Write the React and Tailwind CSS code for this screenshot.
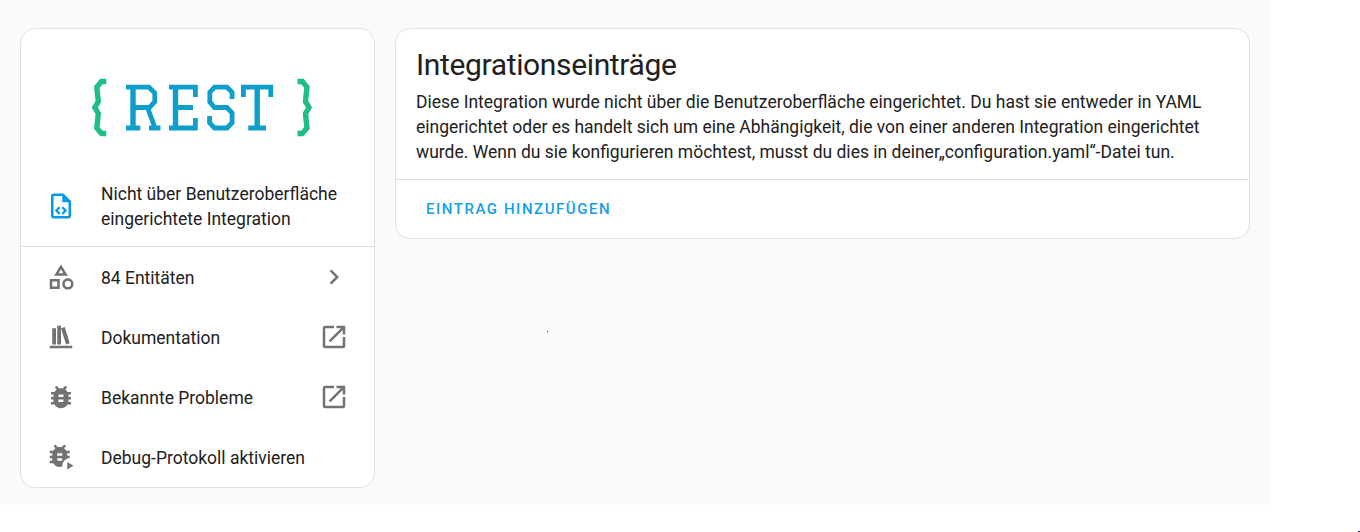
import React from "react";

const paths = {
  file: "M14 2H6C4.89 2 4 2.9 4 4V20C4 21.11 4.89 22 6 22H18C19.11 22 20 21.11 20 20V8L14 2M18 20H6V4H13V9H18V20M9.54 15.65L11.63 17.74L10.35 19L7 15.65L10.35 12.3L11.63 13.56L9.54 15.65M17 15.65L13.65 19L12.38 17.74L14.47 15.65L12.38 13.56L13.65 12.3L17 15.65Z",
  shapes: "M11,13.5V21.5H3V13.5H11M9,15.5H5V19.5H9V15.5M12,2L17.5,11H6.5L12,2M12,5.86L10.08,9H13.92L12,5.86M17.5,13C20,13 22,15 22,17.5C22,20 20,22 17.5,22C15,22 13,20 13,17.5C13,15 15,13 17.5,13M17.5,15A2.5,2.5 0 0,0 15,17.5A2.5,2.5 0 0,0 17.5,20A2.5,2.5 0 0,0 20,17.5A2.5,2.5 0 0,0 17.5,15Z",
  books: "M9 3V18H12V3H9M12 5L16 18L19 17L15 4L12 5M5 5V18H8V5H5M3 19V21H21V19H3Z",
  bug: "M14,12H10V10H14M14,16H10V14H14M20,8H17.19C16.74,7.22 16.12,6.55 15.37,6.04L17,4.41L15.59,3L13.42,5.17C12.96,5.06 12.5,5 12,5C11.5,5 11.04,5.06 10.59,5.17L8.41,3L7,4.41L8.62,6.04C7.88,6.55 7.26,7.22 6.81,8H4V10H6.09C6.04,10.33 6,10.66 6,11V12H4V14H6V15C6,15.34 6.04,15.67 6.09,16H4V18H6.81C7.85,19.79 9.78,21 12,21C14.22,21 16.15,19.79 17.19,18H20V16H17.91C17.96,15.67 18,15.34 18,15V14H20V12H18V11C18,10.66 17.96,10.33 17.91,10H20V8Z",
  bugPlay: "M13,11H9V9H13M13,15H9V13H13M19,7H16.19C15.74,6.22 15.12,5.55 14.37,5.04L16,3.41L14.59,2L12.42,4.17C11.96,4.06 11.5,4 11,4C10.5,4 10.04,4.06 9.59,4.17L7.41,2L6,3.41L7.62,5.04C6.88,5.55 6.26,6.22 5.81,7H3V9H5.09C5.04,9.33 5,9.66 5,10V11H3V13H5V14C5,14.34 5.04,14.67 5.09,15H3V17H5.81C6.85,18.79 8.78,20 11,20C11.7,20 12.4,19.88 13.03,19.65C13,19.43 13,19.22 13,19C13,16.4 14.67,14.16 17,13.34V13H19V11H17V10C17,9.66 16.96,9.33 16.91,9H19V7M17,16V22L22,19L17,16Z",
  chevron: "M8.59,16.58L13.17,12L8.59,7.41L10,6L16,12L10,18L8.59,16.58Z",
  open: "M14,3V5H17.59L7.76,14.83L9.17,16.24L19,6.41V10H21V3M19,19H5V5H12V3H5C3.89,3 3,3.9 3,5V19A2,2 0 0,0 5,21H19A2,2 0 0,0 21,19V12H19V19Z",
};

function Icon({ name, className = "text-[#727272]" }) {
  return (
    <svg viewBox="0 0 24 24" className={`size-[30px] shrink-0 ${className}`} fill="currentColor">
      <path d={paths[name]} />
    </svg>
  );
}

const brace = "M106.3 81.5H101.5L96.8 87L98.3 101.5L94.8 107.5L98.3 113.5L96.8 128L101.5 133.5H106.3";

function Logo() {
  return (
    <svg
      viewBox="90 75 225 65"
      role="img"
      aria-label="REST"
      className="h-[65px] w-[225px]"
      fill="none"
      strokeWidth="4.8"
      stroke="#0d9fc9"
    >
      <g stroke="#1fbd88" strokeWidth="5.4">
        <path d={brace} />
        <path d={brace} transform="translate(403.8 0) scale(-1 1)" />
      </g>
      <path d="M126 87.2H149L154.8 93V101.5L149.5 107.5H133M126 128H140.3M147.5 107.5L155 128M149 128H160.5" />
      <path d="M169 87.2H195.4V97M175.5 107.5H193M169 128H195.4V118" />
      <path d="M232.1 99V92.3L227 87.2H214.5L209.8 92.3V101.8L214.5 107.5H227L232.1 113V122.8L227 128H214.5L209.6 122.8V116" />
      <path d="M243.4 97V87.2H270.8V97M248.3 128H266" />
      <path strokeWidth="5.4" d="M133 87V128M175.5 87V128M257.2 87V128" />
    </svg>
  );
}

const rows = [
  { icon: "shapes", label: "84 Entitäten", end: "chevron" },
  { icon: "books", label: "Dokumentation", end: "open" },
  { icon: "bug", label: "Bekannte Probleme", end: "open" },
  { icon: "bugPlay", label: "Debug-Protokoll aktivieren" },
];

export default function App() {
  return (
    <div className="relative h-[532px] w-[1360px] overflow-hidden bg-white font-['Roboto',sans-serif] text-[17.5px] leading-[25px] text-[#212121]">
      <main className="flex h-[505px] w-[1271px] items-start gap-5 bg-[#fafafa] pt-7 pl-5">
        <aside className="h-[460px] w-[355px] shrink-0 rounded-[15px] border border-[#e0e0e0] bg-white">
          <div className="flex h-[137px] pt-[46px] pl-[69px]">
            <Logo />
          </div>
          <div className="flex h-[81px] items-center gap-[25px] border-b border-[#e0e0e0] pl-[25px]">
            <Icon name="file" className="text-[#039be5]" />
            <p className="pt-px">
              Nicht über Benutzeroberfläche
              <br />
              eingerichtete Integration
            </p>
          </div>
          <ul>
            {rows.map((row) => (
              <li key={row.label} className="flex h-[60px] items-center gap-[25px] pr-[25px] pl-[25px]">
                <Icon name={row.icon} />
                <span className="flex-1 pt-0.5 whitespace-nowrap">{row.label}</span>
                {row.end && <Icon name={row.end} />}
              </li>
            ))}
          </ul>
        </aside>
        <section className="h-[211px] w-[855px] shrink-0 rounded-[15px] border border-[#e0e0e0] bg-white">
          <div className="h-[151px] border-b border-[#e0e0e0] px-5 pt-4">
            <h1 className="text-[30px] leading-10 tracking-[-0.36px]">Integrationseinträge</h1>
            <p className="pt-[5px] whitespace-nowrap">
              Diese Integration wurde nicht über die Benutzeroberfläche eingerichtet. Du hast sie entweder in YAML
              <br />
              eingerichtet oder es handelt sich um eine Abhängigkeit, die von einer anderen Integration eingerichtet
              <br />
              wurde. Wenn du sie konfigurieren möchtest, musst du dies in deiner„configuration.yaml“-Datei tun.
            </p>
          </div>
          <div className="flex h-[58px] items-center pl-[30px]">
            <button className="text-[15px] font-medium tracking-[1.55px] text-[#159fe4]">EINTRAG HINZUFÜGEN</button>
          </div>
        </section>
      </main>
      <span className="absolute top-[331px] left-[547px] size-px bg-[#20206a]" />
      <span className="absolute top-[531px] left-[1358px] h-px w-0.5 bg-[#20206a]" />
    </div>
  );
}
